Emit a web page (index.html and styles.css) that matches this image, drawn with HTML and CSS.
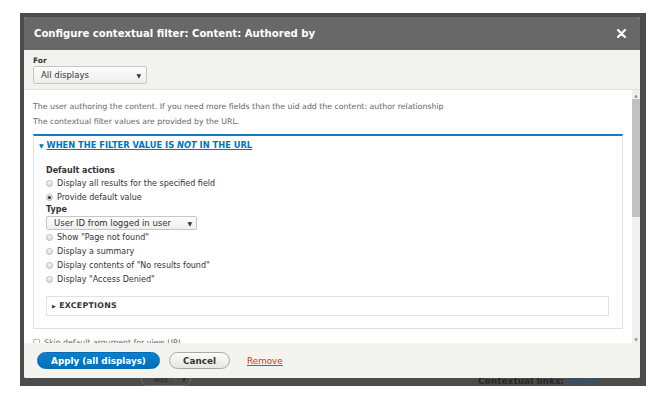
FILE: index.html
```html
<!DOCTYPE html>
<html lang="en">
<head>
    <meta charset="UTF-8">
    <title>Configure contextual filter</title>
    <link rel="stylesheet" href="styles.css">
</head>
<body>
<div class="overlay">
    <div class="dialog">
        <div class="dialog-header">
            <h3>Configure contextual filter: Content: Authored by</h3>
            <svg class="close" width="9" height="9" viewBox="0 0 9 9">
                <path d="M1 1L8 8M8 1L1 8" stroke="#fff" stroke-width="2.2" stroke-linecap="round"/>
            </svg>
        </div>
        <div class="dialog-top">
            <div class="label">For</div>
            <div class="select select-for">All displays <span class="caret">&#9660;</span></div>
        </div>
        <div class="dialog-body">
            <div class="body-content">
                <div class="desc">The user authoring the content. If you need more fields than the uid add the content: author relationship</div>
                <div class="desc">The contextual filter values are provided by the URL.</div>
                <div class="fieldset">
                    <div class="legend"><span class="tri">&#9660;</span> <a href="#">When the filter value is <em>not</em> in the URL</a></div>
                    <div class="fieldset-inner">
                        <div class="label label-first">Default actions</div>
                        <div class="radio"><span class="dot"></span>Display all results for the specified field</div>
                        <div class="radio"><span class="dot checked"></span>Provide default value</div>
                        <div class="label">Type</div>
                        <div class="select select-type">User ID from logged in user <span class="caret">&#9660;</span></div>
                        <div class="radio radio-low"><span class="dot"></span>Show "Page not found"</div>
                        <div class="radio radio-low"><span class="dot"></span>Display a summary</div>
                        <div class="radio radio-low"><span class="dot"></span>Display contents of "No results found"</div>
                        <div class="radio radio-low"><span class="dot"></span>Display "Access Denied"</div>
                        <div class="details"><span class="tri">&#9654;</span> Exceptions</div>
                    </div>
                </div>
                <div class="check"><span class="box"></span>Skip default argument for view URL</div>
            </div>
            <div class="scrollbar">
                <span class="arrow">&#9650;</span>
                <div class="thumb"></div>
                <div class="track"></div>
                <span class="arrow">&#9660;</span>
            </div>
        </div>
        <div class="dialog-footer">
            <button class="btn btn-primary">Apply (all displays)</button>
            <button class="btn">Cancel</button>
            <a href="#" class="remove">Remove</a>
        </div>
    </div>
    <div class="behind">
        <span class="add-btn">Add <i>|</i> &#9662;</span>
        <span class="ctx">Contextual links: <b>Shown</b></span>
    </div>
</div>
</body>
</html>
```

FILE: styles.css
```css
* {
    margin: 0;
    padding: 0;
    box-sizing: border-box;
}

body {
    background: #fff;
    font-family: "DejaVu Sans", "Liberation Sans", sans-serif;
    font-size: 8px;
    color: #333;
}

.overlay {
    margin: 13px 0 0 20px;
    width: 626px;
    height: 373px;
    background: #4c4c4c;
    padding: 4px 6px 0 4px;
}

.dialog {
    width: 616px;
    height: 361px;
    display: flex;
    flex-direction: column;
    border-radius: 3px 3px 2px 2px;
    overflow: hidden;
    background: #fff;
}

.dialog-header {
    height: 33px;
    background: #686868;
    color: #fff;
    display: flex;
    align-items: center;
    justify-content: space-between;
    padding: 0 14px 0 10px;
}

.dialog-header h3 {
    font-size: 10.1px;
    font-weight: bold;
}

.close {
    display: block;
}

.dialog-top {
    height: 40px;
    background: #f2f2ee;
    border-bottom: 1px solid #dedede;
    padding: 6px 9px 0;
}

.label {
    font-weight: bold;
    line-height: 10px;
    font-size: 7.5px;
    color: #333;
}

.select {
    display: flex;
    align-items: center;
    justify-content: space-between;
    border: 1px solid #c6c6c6;
    border-radius: 2px;
    background: linear-gradient(#fdfdfd, #eeeeea);
    color: #333;
}

.caret {
    font-size: 6px;
    color: #333;
}

.select-for {
    width: 114px;
    height: 18px;
    padding: 0 5px 0 7px;
    font-size: 8.5px;
}

.dialog-body {
    flex: 1;
    display: flex;
    overflow: hidden;
}

.body-content {
    flex: 1;
    overflow: hidden;
    padding: 9px 9px 0;
}

.desc {
    line-height: 15px;
    color: #666;
    font-size: 7.8px;
}

.fieldset {
    margin-top: 5px;
    border: 1px solid #e0e0e0;
    border-top: 2px solid #1a79c0;
    padding-bottom: 12px;
}

.legend {
    padding: 4px 5px;
    line-height: 10px;
    color: #0074bd;
    font-weight: bold;
    text-transform: uppercase;
    font-size: 8.3px;
}

.legend .tri {
    font-size: 6px;
    text-decoration: none;
}

.legend a {
    color: #0074bd;
    text-decoration: underline;
}

.fieldset-inner {
    padding: 0 13px 0 12px;
}

.fieldset-inner .label {
    line-height: 11px;
    font-size: 8px;
}

.fieldset-inner .label-first {
    margin-top: 10px;
}

.radio {
    display: flex;
    align-items: center;
    height: 14px;
    font-size: 8px;
    color: #333;
}

.radio-low {
    height: 14.2px;
}

.dot {
    width: 7px;
    height: 7px;
    border-radius: 50%;
    border: 1px solid #b8b8b8;
    background: linear-gradient(#f6f6f6, #dcdcdc);
    margin-right: 4px;
    display: flex;
    align-items: center;
    justify-content: center;
}

.dot.checked::after {
    content: "";
    width: 3px;
    height: 3px;
    border-radius: 50%;
    background: #333;
}

.select-type {
    width: 151px;
    height: 14px;
    margin-top: 1px;
    padding: 0 4px 0 7px;
    font-size: 8.5px;
}

.details {
    margin-top: 9px;
    height: 20px;
    border: 1px solid #e2e2e2;
    padding: 0 5px;
    display: flex;
    align-items: center;
    font-weight: bold;
    text-transform: uppercase;
    font-size: 7.8px;
    letter-spacing: 0.3px;
}

.details .tri {
    font-size: 5px;
    margin-right: 3px;
}

.check {
    display: flex;
    align-items: center;
    margin-top: 8px;
    height: 12px;
    color: #666;
    font-size: 7.8px;
}

.box {
    width: 7px;
    height: 7px;
    border: 1px solid #b8b8b8;
    border-radius: 1px;
    margin-right: 4px;
}

.scrollbar {
    width: 8px;
    display: flex;
    flex-direction: column;
    background: #f0f0f0;
    padding-top: 2px;
}

.arrow {
    font-size: 4px;
    color: #777;
    text-align: center;
    height: 7px;
    line-height: 7px;
}

.thumb {
    height: 118px;
    background: #c1c1c1;
}

.track {
    flex: 1;
}

.dialog-footer {
    height: 35px;
    background: #f3f3f0;
    display: flex;
    align-items: center;
    padding: 0 13px;
}

.btn {
    height: 17px;
    border-radius: 9px;
    border: 1px solid #a8a8a8;
    background: linear-gradient(#fcfcfa, #e6e6e0);
    color: #333;
    font-family: "DejaVu Sans", "Liberation Sans", sans-serif;
    font-weight: bold;
    font-size: 8.8px;
    width: 61px;
    margin-right: 9px;
}

.btn-primary {
    width: 123px;
    border-color: #0a6aaf;
    background: linear-gradient(#0a80cc, #0070bb);
    color: #fff;
}

.remove {
    margin-left: 8px;
    color: #d23b13;
    font-size: 8.8px;
    text-decoration: underline;
}

.behind {
    height: 8px;
    overflow: hidden;
    position: relative;
    line-height: 14px;
    font-size: 8px;
    color: #2a2a2a;
}

.add-btn {
    position: absolute;
    left: 117px;
    top: -6px;
    width: 50px;
    height: 14px;
    border: 1px solid #6a6a6a;
    border-radius: 6px;
    padding-left: 12px;
    font-size: 7px;
}

.add-btn i {
    font-style: normal;
    margin: 0 4px;
    color: #666;
}

.ctx {
    position: absolute;
    left: 454px;
    top: -4px;
    font-weight: bold;
    font-size: 9px;
    color: #262626;
}

.ctx b {
    font-weight: normal;
    color: #1a5a8a;
}
```
